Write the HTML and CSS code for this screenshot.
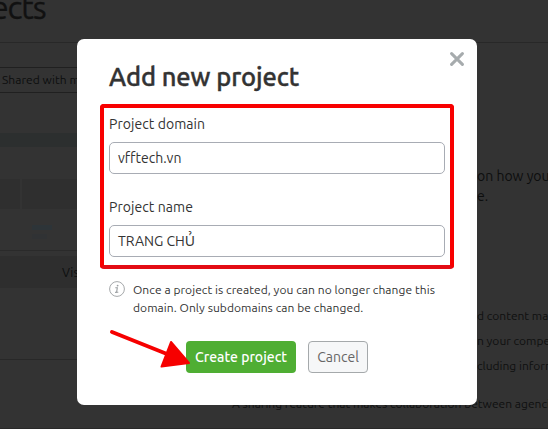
FILE: index.html
```
<!DOCTYPE html>
<html lang="en">
<head>
<meta charset="utf-8">
<title>Projects</title>
<link rel="stylesheet" href="styles.css">
</head>
<body>
<div class="page">
  <header class="page-header"><h1>ects</h1></header>
  <div class="page-body">
    <section class="board">
      <div class="filter">Shared with me</div>
      <div class="band"></div>
      <div class="columns"><span></span><span></span></div>
      <div class="metrics"><i></i><i></i></div>
      <div class="visibility">Visibility</div>
      <div class="empty"></div>
    </section>
    <aside class="about">
      <p class="lead">on how you</p>
      <p class="lead second">e.</p>
      <p class="point first">d content ma</p>
      <p class="point">n your compet</p>
      <p class="point">cluding inform</p>
      <p class="point last">A sharing feature that makes collaboration between agenci</p>
    </aside>
  </div>
</div>
<div class="modal">
  <button class="close" aria-label="Close"><svg width="14" height="14" viewBox="0 0 14 14"><path d="M1.6 1.6 12.4 12.4M12.4 1.6 1.6 12.4" fill="none" stroke="#a6abad" stroke-width="3" stroke-linecap="round"/></svg></button>
  <h2>Add new project</h2>
  <div class="fields">
    <label class="label-domain" for="domain"><span>Project domain</span></label>
    <div class="input" id="domain"><span class="domain">vfftech.vn</span></div>
    <label class="label-name" for="name"><span>Project name</span></label>
    <div class="input" id="name"><span class="name">TRANG CHỦ</span></div>
  </div>
  <div class="note">
    <svg width="16" height="16" viewBox="0 0 16 16"><circle cx="8" cy="8" r="7.4" fill="none" stroke="#a5a8aa"/><path d="M6.3 6.8h2l-.7 4.5h1.7M6.1 11.4h1.5" fill="none" stroke="#999da0" stroke-width="1.1"/><circle cx="8.6" cy="4.6" r=".9" fill="#999da0"/></svg>
    <p><span class="note-one">Once a project is created, you can no longer change this</span><span class="note-two">domain. Only subdomains can be changed.</span></p>
  </div>
  <div class="actions">
    <button class="create">Create project</button>
    <button class="cancel">Cancel</button>
  </div>
  <svg class="arrow" width="84" height="50" viewBox="0 0 84 50"><path d="M5 6 60 28" stroke="#f60000" stroke-width="4" stroke-linecap="round"/><path d="M64 16 82 37 54.500 40.500Z" fill="#f60000" stroke="#f60000" stroke-width="2" stroke-linejoin="round"/></svg>
</div>
</body>
</html>
```
FILE: styles.css
```
* { box-sizing: border-box; }
body { margin: 0; width: 548px; height: 429px; overflow: hidden; position: relative; background: #333; color: #333; font-family: Ubuntu, "Noto Sans", sans-serif; }
h1, h2, p { margin: 0; }
button { font: inherit; padding: 0; }

.page { height: 429px; overflow: hidden; color: #0d0e0e; border-bottom: 1px solid #292929; }
.page-header { height: 43px; border-bottom: 1px solid #282828; }
.page-header h1 { margin: 0 0 0 -9px; font-size: 32px; line-height: 15px; font-weight: 400; letter-spacing: -1.1px; color: #111; -webkit-text-stroke: .3px #111; }
.page-body { display: grid; grid-template-columns: 232px 1fr; }
.filter { margin-top: 24px; height: 26px; border: solid #202020; border-width: 1px 0; padding-left: 2px; font-size: 12px; line-height: 24px; letter-spacing: .05px; white-space: nowrap; }
.band { margin-top: 40px; height: 14px; background: #2c2f2f; }
.columns { margin-top: 32px; height: 30px; display: flex; gap: 2px; }
.columns span { background: #2f2f2f; flex: 1; }
.columns span:first-child { flex: 0 0 20px; }
.metrics { height: 42px; padding: 16px 0 0 32px; border-bottom: 1px solid #2a2a2a; }
.metrics i { display: block; width: 20px; height: 5px; margin-bottom: 4px; background: #2d3438; }
.metrics i + i { width: 15px; background: #303234; }
.visibility { margin-top: 5px; height: 32px; background: #2e2e2e; padding-left: 62px; font-size: 12.5px; line-height: 32px; }
.empty { height: 72px; border-bottom: 1px solid #282828; }
.about { white-space: nowrap; }
.lead { padding: 123px 0 0 245px; font-size: 14px; line-height: 20px; }
.lead.second { padding-top: 0; }
.point { padding-left: 245px; font-size: 12px; line-height: 25px; color: #0f1010; }
.point.first { padding-top: 97px; }
.point.last { padding: 13px 0 0; letter-spacing: .01px; }

.modal { position: absolute; left: 77px; top: 39px; width: 400px; height: 366px; border-radius: 7px; background: #fff; padding-top: 21px; }
.close { position: absolute; right: 13px; top: 13px; width: 14px; height: 14px; border: 0; background: none; }
.close svg { display: block; }
.modal h2 { margin-left: 32px; height: 44px; font-size: 25.5px; line-height: 34px; font-weight: 500; letter-spacing: -.1px; color: #333; -webkit-text-stroke: .4px #333; }
.fields { margin: 0 23px; height: 165px; padding: 7px 5px 0; border: 4px solid #f80000; border-bottom-color: #e30c14; border-radius: 4px; }
.fields label { display: block; height: 27px; font-size: 14px; line-height: 18px; letter-spacing: .06px; }
.fields .label-name { margin-top: 24px; }
.input { height: 32px; border: 1px solid #a8acb4; border-radius: 5px; padding-left: 8px; font-size: 14px; line-height: 30px; }
.note { display: flex; gap: 8px; margin: 12px 0 0 32px; }
.note svg { flex: none; }
.note p { font-size: 12px; line-height: 18px; letter-spacing: .06px; white-space: nowrap; }
.note p span { display: block; }
.actions { display: flex; gap: 12px; margin: 24px 0 0 109px; }
.actions button { height: 32px; border-radius: 4px; font-size: 14px; line-height: 30px; white-space: nowrap; }
.create { width: 110px; border: 0; background: #4fae33; color: #fff; font-weight: 500; }
.cancel { width: 60px; border: 1px solid #a5a9ab; background: #f6f7f8; color: #666; }
.arrow { position: absolute; left: 30px; top: 287px; }
```
